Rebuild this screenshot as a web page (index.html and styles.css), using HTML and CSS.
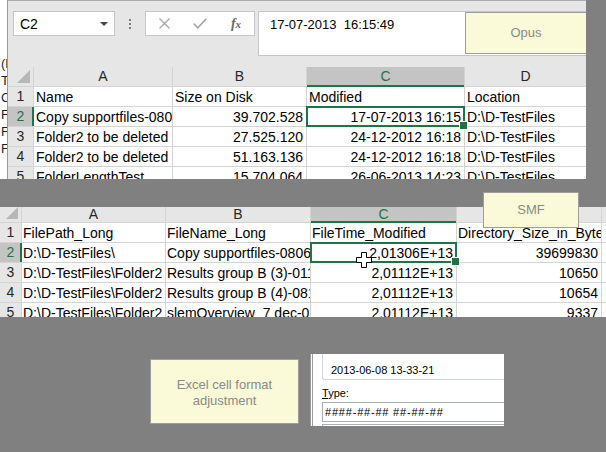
FILE: index.html
```html
<!DOCTYPE html>
<html lang="en">
<head>
<meta charset="utf-8">
<title>Excel cell format adjustment</title>
<link rel="stylesheet" href="styles.css">
</head>
<body>
<main class="canvas">

  <section class="shot shot-opus">
    <div class="behind">
      <span>(D</span><span>Te</span><span>C</span><span>F</span><span>F</span><span>F</span>
    </div>
    <div class="excel">
      <div class="fbar">
        <div class="namebox">
          <span>C2</span>
          <svg class="caret" width="8" height="4" viewBox="0 0 8 4"><polygon points="0,0 8,0 4,4" fill="#444"/></svg>
        </div>
        <div class="grip">
          <svg width="3" height="11" viewBox="0 0 3 11"><rect x="0" y="0" width="2" height="2" fill="#7d7d7d"/><rect x="0" y="4" width="2" height="2" fill="#7d7d7d"/><rect x="0" y="8" width="2" height="2" fill="#7d7d7d"/></svg>
        </div>
        <div class="fxgroup">
          <svg width="11" height="11" viewBox="0 0 11 11"><path d="M0.5 0.5 L10.5 10.5 M10.5 0.5 L0.5 10.5" stroke="#a9a9a9" stroke-width="1.4" fill="none"/></svg>
          <svg width="14" height="11" viewBox="0 0 14 11"><polyline points="0.8,5.6 4.8,9.8 13.2,0.8" stroke="#a9a9a9" stroke-width="1.7" fill="none"/></svg>
          <span class="fx">f<span class="fx-x">x</span></span>
        </div>
        <div class="finput">17-07-2013&nbsp; 16:15:49</div>
      </div>

      <div class="sheet sheet-opus">
        <div class="h corner"><svg width="13" height="13" viewBox="0 0 13 13"><polygon points="13,0 13,13 0,13" fill="#b7b7b7"/></svg></div>
        <div class="h">A</div>
        <div class="h">B</div>
        <div class="h h-active">C</div>
        <div class="h">D</div>

        <div class="h rh">1</div>
        <div class="c">Name</div>
        <div class="c">Size on Disk</div>
        <div class="c">Modified</div>
        <div class="c">Location</div>

        <div class="h rh rh-active">2</div>
        <div class="c">Copy supportfiles-08062013</div>
        <div class="c num">39.702.528</div>
        <div class="c num sel">17-07-2013 16:15</div>
        <div class="c">D:\D-TestFiles</div>

        <div class="h rh">3</div>
        <div class="c">Folder2 to be deleted</div>
        <div class="c num">27.525.120</div>
        <div class="c num">24-12-2012 16:18</div>
        <div class="c">D:\D-TestFiles</div>

        <div class="h rh">4</div>
        <div class="c">Folder2 to be deleted</div>
        <div class="c num">51.163.136</div>
        <div class="c num">24-12-2012 16:18</div>
        <div class="c">D:\D-TestFiles</div>

        <div class="h rh">5</div>
        <div class="c">FolderLengthTest</div>
        <div class="c num">15.704.064</div>
        <div class="c num">26-06-2013 14:23</div>
        <div class="c">D:\D-TestFiles</div>
      </div>
    </div>
  </section>

  <section class="shot shot-smf">
    <div class="sheet sheet-smf">
      <div class="h corner"><svg width="12" height="12" viewBox="0 0 12 12"><polygon points="12,0 12,12 0,12" fill="#b7b7b7"/></svg></div>
      <div class="h">A</div>
      <div class="h">B</div>
      <div class="h h-active">C</div>
      <div class="h">D</div>
      <div class="h">E</div>

      <div class="h rh">1</div>
      <div class="c">FilePath_Long</div>
      <div class="c">FileName_Long</div>
      <div class="c">FileTime_Modified</div>
      <div class="c">Directory_Size_in_Bytes</div>
      <div class="c"></div>

      <div class="h rh rh-active">2</div>
      <div class="c">D:\D-TestFiles\</div>
      <div class="c">Copy supportfiles-08062013</div>
      <div class="c num sel">2,01306E+13</div>
      <div class="c num">39699830</div>
      <div class="c"></div>

      <div class="h rh">3</div>
      <div class="c">D:\D-TestFiles\Folder2 to be deleted\</div>
      <div class="c">Results group B (3)-0112</div>
      <div class="c num">2,01112E+13</div>
      <div class="c num">10650</div>
      <div class="c"></div>

      <div class="h rh">4</div>
      <div class="c">D:\D-TestFiles\Folder2 to be deleted\</div>
      <div class="c">Results group B (4)-0812</div>
      <div class="c num">2,01112E+13</div>
      <div class="c num">10654</div>
      <div class="c"></div>

      <div class="h rh">5</div>
      <div class="c">D:\D-TestFiles\Folder2 to be deleted\</div>
      <div class="c">slemOverview_7 dec-08</div>
      <div class="c num">2,01112E+13</div>
      <div class="c num">9337</div>
      <div class="c"></div>
    </div>
    <svg class="cursor" width="16" height="16" viewBox="0 0 16 16"><polygon points="5.5,0.5 10.5,0.5 10.5,5.5 15.5,5.5 15.5,10.5 10.5,10.5 10.5,15.5 5.5,15.5 5.5,10.5 0.5,10.5 0.5,5.5 5.5,5.5" fill="#fff" stroke="#000" stroke-width="1"/></svg>
  </section>

  <section class="shot shot-fmt">
    <div class="sample">2013-06-08 13-33-21</div>
    <div class="type-label"><span class="acc">T</span>ype:</div>
    <div class="type-input">####-##-## ##-##-##</div>
    <div class="type-list"></div>
  </section>

  <div class="note note-opus">Opus</div>
  <div class="note note-smf">SMF</div>
  <div class="note note-fmt">Excel cell format adjustment</div>

</main>
</body>
</html>
```

FILE: styles.css
```css
* { box-sizing: border-box; }

html, body {
  margin: 0;
  padding: 0;
}

body {
  width: 606px;
  height: 452px;
  overflow: hidden;
  background: #808080;
  font-family: "Liberation Sans", Arial, sans-serif;
}

.canvas {
  position: relative;
  width: 606px;
  height: 452px;
}

/* screenshots placed on the canvas */
.shot {
  position: absolute;
  overflow: hidden;
}

.shot-opus {
  left: 0;
  top: 0;
  width: 586px;
  height: 179px;
  display: flex;
}

.shot-smf {
  left: 0;
  top: 207px;
  width: 606px;
  height: 110px;
}

.shot-fmt {
  left: 310px;
  top: 354px;
  width: 194px;
  height: 72px;
  background: #fff;
  border-left: 3px double #9c9c9c;
  padding-left: 9px;
  display: flex;
  flex-direction: column;
  font-size: 11px;
  color: #000;
}

/* window fragment behind the top Excel window */
.behind {
  flex: none;
  width: 8px;
  background: #fff;
  border-right: 1px solid #9a9a9a;
  padding: 55px 0 0 1px;
  display: flex;
  flex-direction: column;
  font-size: 13px;
  line-height: 17px;
  white-space: nowrap;
  overflow: hidden;
  color: #1e1e1e;
}

.excel {
  flex: 1;
  min-width: 0;
  background: #e6e6e6;
  border-top: 1px solid #ababab;
  display: flex;
  flex-direction: column;
}

/* formula bar */
.fbar {
  height: 66px;
  flex: none;
  display: flex;
  align-items: flex-start;
  padding: 10px 0 0 5px;
}

.namebox {
  width: 102px;
  height: 25px;
  background: #fff;
  border: 1px solid #c6c6c6;
  display: flex;
  align-items: center;
  justify-content: space-between;
  padding: 0 6px 0 6px;
  font-size: 14px;
  color: #000;
}

.grip {
  width: 30px;
  height: 25px;
  display: flex;
  align-items: center;
  justify-content: center;
  padding-top: 2px;
}

.fxgroup {
  width: 110px;
  height: 25px;
  background: #fff;
  border: 1px solid #c6c6c6;
  display: grid;
  grid-template-columns: 1fr 1fr 1fr;
  align-items: center;
  justify-items: center;
}

.fx {
  font-family: "Liberation Serif", "Times New Roman", serif;
  font-style: italic;
  font-weight: bold;
  font-size: 14px;
  color: #6b6b6b;
  line-height: 14px;
}

.fx-x {
  font-size: 11px;
}

.finput {
  flex: 1;
  height: 45px;
  margin-left: 3px;
  background: #fff;
  border: 1px solid #c6c6c6;
  border-right: 0;
  padding: 5px 0 0 11px;
  font-size: 13px;
  line-height: 16px;
  color: #000;
  white-space: nowrap;
}

/* spreadsheet grids: the 1px gaps are the gridlines */
.sheet {
  display: grid;
  gap: 1px;
  background: #d4d4d4;
  font-size: 14px;
}

.sheet-opus {
  grid-template-columns: 25px 138px 133px 157px 121px;
  grid-template-rows: 19px;
  grid-auto-rows: 19px;
}

.sheet-smf {
  grid-template-columns: 21px 143px 144px 145px 144px 40px;
  grid-template-rows: 15px;
  grid-auto-rows: 19px;
}

.c {
  background: #fff;
  color: #000;
  padding: 1px 2px 0 2px;
  line-height: 18px;
  white-space: nowrap;
  overflow: hidden;
}

.sheet-smf .c {
  padding-left: 1px;
}

.c.num {
  text-align: right;
  padding-right: 3px;
}

.h {
  background: #e6e6e6;
  color: #262626;
  text-align: center;
  line-height: 19px;
  overflow: hidden;
}

.sheet-smf .h {
  line-height: 15px;
}

.sheet-smf .rh {
  line-height: 19px;
}

.corner {
  display: flex;
  align-items: flex-end;
  justify-content: flex-end;
  padding: 0 3px 3px 0;
}

.h-active {
  background: #c4c4c4;
  color: #217346;
  box-shadow: inset 0 -1px 0 #217346, 0 1px 0 #217346;
}

.rh-active {
  background: #c4c4c4;
  color: #217346;
  box-shadow: inset -1px 0 0 #217346, 1px 0 0 #217346;
}

.sel {
  position: relative;
  z-index: 2;
  overflow: visible;
  outline: 2px solid #217346;
  outline-offset: -1px;
}

.sel::after {
  content: "";
  position: absolute;
  right: -4px;
  bottom: -4px;
  width: 7px;
  height: 7px;
  background: #217346;
  border: 1px solid #fff;
}

.cursor {
  position: absolute;
  left: 356px;
  top: 45px;
  z-index: 3;
}

/* format cells dialog fragment */
.sample {
  flex: none;
  height: 26px;
  border-left: 1px solid #cdd6de;
  border-bottom: 1px solid #cdd6de;
  border-bottom-left-radius: 3px;
  padding: 10px 0 0 8px;
  line-height: 13px;
  white-space: nowrap;
}

.type-label {
  flex: none;
  margin-top: 6px;
  line-height: 15px;
}

.acc {
  text-decoration: underline;
}

.type-input {
  flex: none;
  height: 20px;
  margin-top: 1px;
  border: 1px solid #a9afb6;
  border-right: 0;
  padding-left: 2px;
  line-height: 18px;
  letter-spacing: 0.8px;
  white-space: nowrap;
}

.type-list {
  flex: 1;
  margin-top: 2px;
  border-top: 1px solid #a9afb6;
  border-left: 1px solid #a9afb6;
}

/* yellow callout labels */
.note {
  position: absolute;
  background: #fafad9;
  border: 1px solid #9d9d9d;
  color: #8a8a8a;
  font-size: 13px;
  line-height: 16px;
  display: flex;
  align-items: center;
  justify-content: center;
  text-align: center;
}

.note-opus {
  left: 465px;
  top: 12px;
  width: 121px;
  height: 42px;
  border-right: 0;
}

.note-smf {
  left: 483px;
  top: 192px;
  width: 96px;
  height: 36px;
}

.note-fmt {
  left: 150px;
  top: 359px;
  width: 149px;
  height: 65px;
  padding: 2px 12px 0;
}
```
